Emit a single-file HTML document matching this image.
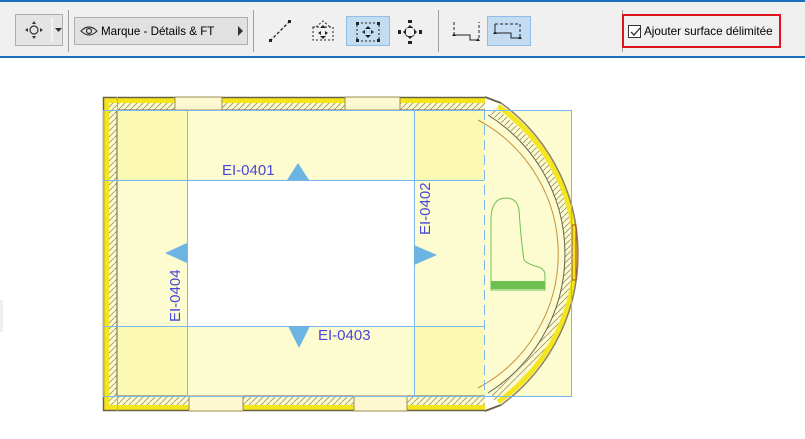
<!DOCTYPE html>
<html><head><meta charset="utf-8"><style>
body{margin:0;width:805px;height:439px;background:#fff;overflow:hidden;font-family:"Liberation Sans",sans-serif;position:relative}
.tb{position:absolute;left:0;top:0;width:805px;height:58px;background:#f0f0f0;border-top:2px solid #1a6fc0;border-bottom:2px solid #1a6fc0;box-sizing:border-box}
.btn{position:absolute;box-sizing:border-box}
.sep{position:absolute;top:8px;width:1px;height:42px;background:#a0a0a0}
</style></head><body>
<div class="tb">
 <div class="btn" style="left:15px;top:12px;width:48px;height:32px;border:1px solid #adadad;background:#e4e4e4"></div>
 <svg style="position:absolute;left:15px;top:12px" width="50" height="32">
  <circle cx="19" cy="16" r="4" fill="none" stroke="#333" stroke-width="1.2"/>
  <path d="M19 7l-2 3h4zM19 25l-2-3h4zM10 16l3-2v4zM28 16l-3-2v4z" fill="#333"/>
  <line x1="37" y1="4" x2="37" y2="28" stroke="#fff"/>
  <path d="M40 14h7l-3.5 4z" fill="#333"/>
 </svg>
 <div class="sep" style="left:68px"></div>
 <div class="btn" style="left:74px;top:15px;width:174px;height:28px;border:1px solid #adadad;background:#e1e1e1"></div>
 <svg style="position:absolute;left:80px;top:22px" width="20" height="14"><path d="M1 7Q9 -1 17 7Q9 15 1 7z" fill="none" stroke="#333" stroke-width="1.2"/><circle cx="9" cy="7" r="2.5" fill="none" stroke="#333" stroke-width="1.2"/></svg>
 <div style="position:absolute;left:101px;top:23px;font-size:11.6px;color:#000">Marque - Détails &amp; FT</div>
 <svg style="position:absolute;left:238px;top:24px" width="6" height="10"><path d="M0 0l5 5-5 5z" fill="#333"/></svg>
 <div class="sep" style="left:253px"></div>
 <svg style="position:absolute;left:268px;top:17px" width="24" height="24"><path d="M2 22L22 2" stroke="#222" stroke-dasharray="3 2" stroke-width="1.3"/><rect x="1" y="20" width="3" height="3" fill="#222"/><rect x="20" y="1" width="3" height="3" fill="#222"/></svg>
 <svg style="position:absolute;left:310px;top:17px" width="26" height="24"><rect x="3" y="8" width="20" height="13" fill="none" stroke="#222" stroke-dasharray="2 2"/><path d="M6 8L13 2L20 8" fill="none" stroke="#222" stroke-dasharray="2 2"/><path d="M13 6l-3 3h6zM13 20l-3-3h6zM8 14l3-2v4zM18 14l-3-2v4z" fill="#222"/></svg>
 <div class="btn" style="left:346px;top:14px;width:44px;height:30px;background:#c4dcf2;border:1px solid #8fbde8"></div>
 <svg style="position:absolute;left:355px;top:19px" width="26" height="22"><rect x="2" y="2" width="22" height="18" fill="none" stroke="#222" stroke-dasharray="2 2"/><rect x="1" y="1" width="3" height="3" fill="#222"/><rect x="22" y="1" width="3" height="3" fill="#222"/><rect x="1" y="18" width="3" height="3" fill="#222"/><rect x="22" y="18" width="3" height="3" fill="#222"/><path d="M13 5l-3 3h6zM13 17l-3-3h6zM7 11l3-2v4zM19 11l-3-2v4z" fill="#222"/></svg>
 <svg style="position:absolute;left:398px;top:18px" width="24" height="24"><path d="M12 5l-3 3h6zM12 19l-3-3h6zM5 12l3-3v6zM19 12l-3-3v6z" fill="#222"/><circle cx="12" cy="12" r="5" fill="none" stroke="#222" stroke-dasharray="2 1.5"/><rect x="10" y="0" width="4" height="3" fill="#222"/><rect x="10" y="21" width="4" height="3" fill="#222"/><rect x="0" y="10" width="3" height="4" fill="#222"/><rect x="21" y="10" width="3" height="4" fill="#222"/></svg>
 <div class="sep" style="left:438px"></div>
 <svg style="position:absolute;left:450px;top:18px" width="30" height="22"><path d="M4 2v13h16v5h9V2" fill="none" stroke="#222" stroke-dasharray="3 2"/><path d="M4 15h16v5h9" fill="none" stroke="#222"/><path d="M4 13l-2 3h4zM28 18l-2 3h4z" fill="#222"/></svg>
 <div class="btn" style="left:487px;top:14px;width:44px;height:30px;background:#c4dcf2;border:1px solid #8fbde8"></div>
 <svg style="position:absolute;left:492px;top:20px" width="34" height="20"><path d="M3 2h25v14h-9" fill="none" stroke="#222" stroke-dasharray="3 2"/><path d="M3 2v9h16v5h9" fill="none" stroke="#222"/><path d="M3 9l-2 3h4zM28 14l-2 3h4z" fill="#222"/></svg>
 <div class="sep" style="left:622px"></div>
 <div class="btn" style="left:622px;top:12px;width:159px;height:34px;border:2px solid #e0141c"></div>
 <div class="btn" style="left:628px;top:23px;width:13px;height:13px;border:1px solid #333;background:#fff"></div>
 <svg style="position:absolute;left:629px;top:24px" width="12" height="12"><path d="M2 6l3 3 6-7" fill="none" stroke="#333" stroke-width="1.3"/></svg>
 <div style="position:absolute;left:644px;top:23px;font-size:11.7px;color:#000">Ajouter surface délimitée</div>
</div>
<svg style="position:absolute;left:0;top:0" width="805" height="439">
 <defs><pattern id="h" width="6" height="6" patternUnits="userSpaceOnUse"><rect width="6" height="6" fill="#fdfbd0"/><path d="M0 6L6 0" stroke="#9a8f6a" stroke-width="0.8"/></pattern></defs>
 <rect x="0" y="300" width="3" height="32" fill="#f0f0f0"/>
 <rect x="117" y="110" width="455" height="286" fill="#fdfbd0"/>
 <rect x="117" y="110" width="70" height="70" fill="#fbf9b2"/>
 <rect x="414" y="110" width="70" height="70" fill="#fbf9b2"/>
 <rect x="117" y="326" width="70" height="70" fill="#fbf9b2"/>
 <rect x="414" y="326" width="70" height="70" fill="#fbf9b2"/>
 <rect x="187" y="180" width="227" height="146" fill="#fff"/>
 <!-- arc wall -->
 <path d="M498 106A180.7 180.7 0 0 1 498 402" fill="none" stroke="#f5e61c" stroke-width="5"/>
 <path d="M501 103A186.6 186.6 0 0 1 501 405" fill="none" stroke="#8a8260" stroke-width="1.5"/>
 <path d="M492 111A171.3 171.3 0 0 1 492 397" fill="none" stroke="url(#h)" stroke-width="8"/>
 <path d="M488 115A164 164 0 0 1 488 393" fill="none" stroke="#6a6248" stroke-width="1"/>
 <path d="M478 120A152 152 0 0 1 478 388" fill="none" stroke="#c8923a" stroke-width="1"/>
 <rect x="572" y="225" width="4" height="55" fill="none" stroke="#a04818" stroke-width="1"/>
 <path d="M485 97L501 103M485 411L501 405" stroke="#6a6248" stroke-width="2"/>
 <!-- straight walls -->
 <rect x="103" y="97" width="382" height="6" fill="#f5e61c"/>
 <rect x="103" y="103" width="382" height="7" fill="url(#h)"/>
 <rect x="103" y="405" width="382" height="6" fill="#f5e61c"/>
 <rect x="103" y="397" width="382" height="8" fill="url(#h)"/>
 <rect x="103" y="97" width="6" height="314" fill="#f5e61c"/>
 <rect x="109" y="103" width="8" height="302" fill="url(#h)"/>
 <path d="M485 97.5H103.5V410.5H485" fill="none" stroke="#6a6248" stroke-width="1.5"/>
 <path d="M117 110H485M117 396H485M117 110V396" stroke="#6a6248" stroke-width="1"/>
 <rect x="175" y="97" width="47" height="13" fill="#fdf8d0" stroke="#9a8f50"/>
 <rect x="345" y="97" width="55" height="13" fill="#fdf8d0" stroke="#9a8f50"/>
 <rect x="189" y="396" width="54" height="15" fill="#fdf8d0" stroke="#9a8f50"/>
 <rect x="354" y="396" width="53" height="15" fill="#fdf8d0" stroke="#9a8f50"/>
 <g stroke="#7ab8f0" stroke-width="1" fill="none">
  <rect x="103.5" y="110.5" width="468" height="286"/>
  <path d="M117.5 97V411M187.5 110V396M414.5 110V396M103 180.5H484M103 326.5H484"/>
  <path d="M484.5 110V396" stroke-dasharray="10 5"/>
 </g>
 <path d="M491 290V220Q491 198 506 198Q517 198 519 210Q521 240 524 260Q526 263 535 266Q545 268 545 275V290Z" fill="none" stroke="#6cc050" stroke-width="1"/>
 <path d="M491 282H545" stroke="#6cc050"/>
 <rect x="491" y="281" width="54" height="8" fill="#6cc050"/>
 <g fill="#6cb4e4">
  <path d="M298 163L287 180H309Z"/>
  <path d="M414 245V265L437 255Z"/>
  <path d="M187 243V263L165 253Z"/>
  <path d="M288 326H310L299 348Z"/>
 </g>
 <g fill="#4646d8" font-size="15" font-family="Liberation Sans,sans-serif">
  <text x="222" y="175">EI-0401</text>
  <text x="318" y="340">EI-0403</text>
  <text transform="translate(430,235) rotate(-90)">EI-0402</text>
  <text transform="translate(180,322) rotate(-90)">EI-0404</text>
 </g>
</svg>
</body></html>
